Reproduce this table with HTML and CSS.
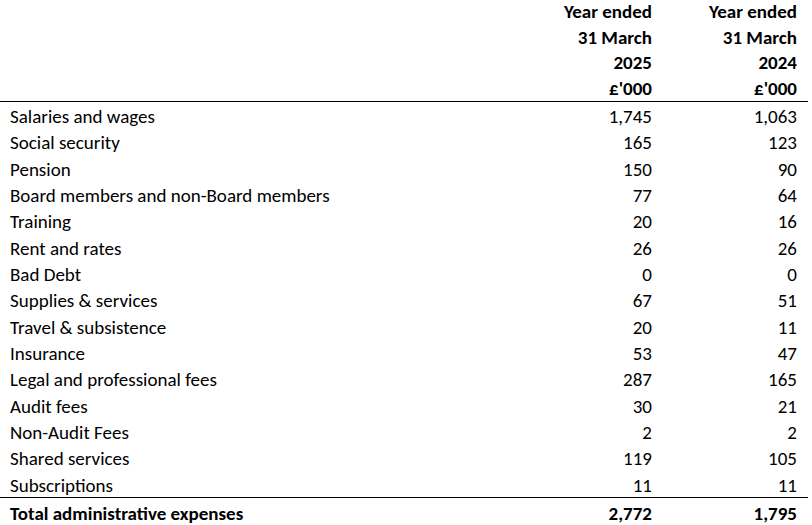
FILE: index.html
```html
<!DOCTYPE html>
<html lang="en">
<head>
<meta charset="utf-8">
<title>Administrative expenses</title>
<link rel="stylesheet" href="styles.css">
</head>
<body>
<table class="fin">
  <colgroup>
    <col class="c-label">
    <col class="c-num1">
    <col class="c-num2">
  </colgroup>
  <thead>
    <tr><th></th><th>Year ended</th><th>Year ended</th></tr>
    <tr><th></th><th>31 March</th><th>31 March</th></tr>
    <tr><th></th><th>2025</th><th>2024</th></tr>
    <tr class="last-head"><th></th><th>£'000</th><th>£'000</th></tr>
  </thead>
  <tbody>
    <tr><td>Salaries and wages</td><td>1,745</td><td>1,063</td></tr>
    <tr><td>Social security</td><td>165</td><td>123</td></tr>
    <tr><td>Pension</td><td>150</td><td>90</td></tr>
    <tr><td>Board members and non-Board members</td><td>77</td><td>64</td></tr>
    <tr><td>Training</td><td>20</td><td>16</td></tr>
    <tr><td>Rent and rates</td><td>26</td><td>26</td></tr>
    <tr><td>Bad Debt</td><td>0</td><td>0</td></tr>
    <tr><td>Supplies &amp; services</td><td>67</td><td>51</td></tr>
    <tr><td>Travel &amp; subsistence</td><td>20</td><td>11</td></tr>
    <tr><td>Insurance</td><td>53</td><td>47</td></tr>
    <tr><td>Legal and professional fees</td><td>287</td><td>165</td></tr>
    <tr><td>Audit fees</td><td>30</td><td>21</td></tr>
    <tr><td>Non-Audit Fees</td><td>2</td><td>2</td></tr>
    <tr><td>Shared services</td><td>119</td><td>105</td></tr>
    <tr><td>Subscriptions</td><td>11</td><td>11</td></tr>
  </tbody>
  <tfoot>
    <tr><td>Total administrative expenses</td><td>2,772</td><td>1,795</td></tr>
  </tfoot>
</table>
</body>
</html>
```
FILE: styles.css
```css
html, body {
  margin: 0;
  padding: 0;
  background: #ffffff;
}
body {
  font-family: Carlito, Lato, "Liberation Sans", sans-serif;
  font-size: 19px;
  color: #000000;
}
.fin {
  border-collapse: collapse;
  width: 808px;
  table-layout: fixed;
}
.c-label { width: 512px; }
.c-num1 { width: 144px; }
.c-num2 { width: 152px; }
.fin th, .fin td {
  padding: 0;
  white-space: nowrap;
}
.fin th {
  font-weight: bold;
  text-align: right;
  height: 25.5px;
  line-height: 25.5px;
  padding-right: 4px;
}
.fin thead tr:first-child th { height: 24.5px; line-height: 24.5px; }
.fin .last-head th { border-bottom: 1px solid #000; }
.fin th:last-child,
.fin td:last-child { padding-right: 11px; }
.fin td {
  height: 23.35px;
  line-height: 23.35px;
  padding-top: 3px;
  text-align: right;
  padding-right: 4px;
}
.fin td:first-child {
  text-align: left;
  padding-left: 10px;
  padding-right: 0;
}
.fin tbody tr:last-child td { border-bottom: 1px solid #000; }
.fin tfoot td {
  font-weight: bold;
  height: 23px;
  line-height: 23px;
  padding-top: 4px;
  border-bottom: 1px solid #000;
}
```
